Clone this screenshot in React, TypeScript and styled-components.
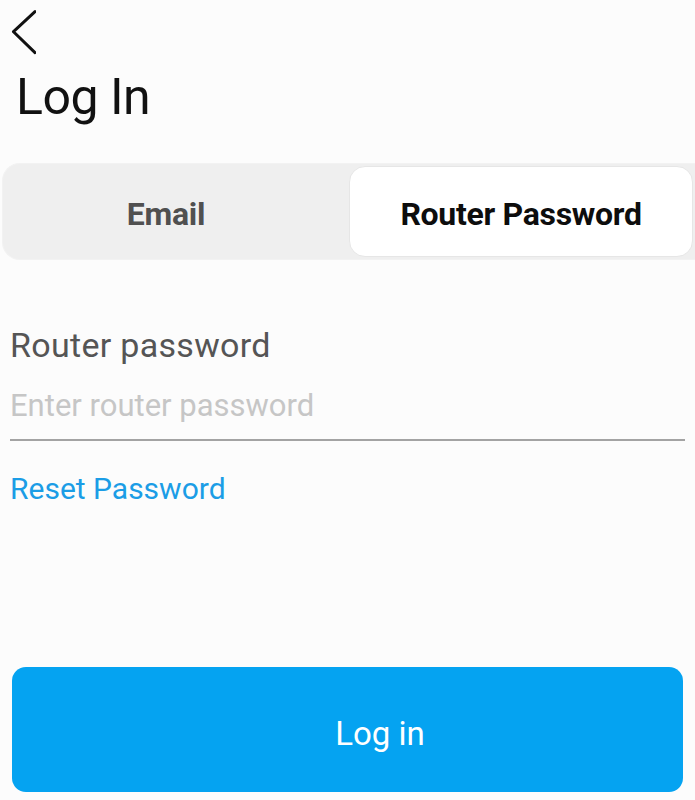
import styled, { createGlobalStyle } from 'styled-components'

const GlobalStyle = createGlobalStyle`
  html, body {
    margin: 0;
    padding: 0;
    background: #fcfcfc;
  }
  body {
    font-family: Roboto, 'Liberation Sans', sans-serif;
  }
`

const App = () => {
  return (
    <>
      <GlobalStyle />
      <StyledPage>
        <StyledHeader>
          <StyledBackButton aria-label="Back">
            <svg width="26" height="46" viewBox="0 0 26 46" fill="none">
              <polyline
                points="25,2.7 3.5,22.7 25,43.7"
                stroke="#111"
                strokeWidth="3"
                strokeLinecap="round"
                strokeLinejoin="round"
              />
            </svg>
          </StyledBackButton>
          <StyledTitle>Log In</StyledTitle>
        </StyledHeader>

        <StyledSegmented>
          <StyledTab>Email</StyledTab>
          <StyledTab $active>Router Password</StyledTab>
        </StyledSegmented>

        <StyledForm>
          <StyledLabel htmlFor="router-password">Router password</StyledLabel>
          <StyledInput
            id="router-password"
            type="password"
            placeholder="Enter router password"
          />
          <StyledLink href="#">Reset Password</StyledLink>
        </StyledForm>

        <StyledLoginButton>Log in</StyledLoginButton>
      </StyledPage>
    </>
  )
}

export default App

const StyledPage = styled.div`
  box-sizing: border-box;
  min-height: 100vh;
  display: flex;
  flex-direction: column;
  padding-bottom: 8px;
`

const StyledHeader = styled.header`
  display: flex;
  flex-direction: column;
  padding: 9px 0 0 10px;
`

const StyledBackButton = styled.button`
  display: block;
  width: 26px;
  height: 46px;
  padding: 0;
  border: none;
  background: none;
  cursor: pointer;

  svg {
    display: block;
  }
`

const StyledTitle = styled.h1`
  margin: 12px 0 0 6px;
  font-size: 50px;
  line-height: 60px;
  font-weight: 400;
  color: #111;
  letter-spacing: -0.5px;
`

const StyledSegmented = styled.div`
  box-sizing: border-box;
  margin: 36px 0 0 2px;
  height: 97px;
  padding: 2px 2px 2px 0;
  display: grid;
  grid-template-columns: 346px 1fr;
  background: #efefef;
  border: 1px solid #f2f2f2;
  border-right: none;
  border-radius: 18px 0 0 18px;
`

const StyledTab = styled.button<{ $active?: boolean }>`
  box-sizing: border-box;
  display: flex;
  align-items: center;
  justify-content: center;
  padding: ${({ $active }) => ($active ? '5px 0 0' : '5px 20px 0 0')};
  border: ${({ $active }) => ($active ? '1px solid #e6e6e6' : 'none')};
  border-radius: 16px;
  background: ${({ $active }) => ($active ? '#ffffff' : 'transparent')};
  color: ${({ $active }) => ($active ? '#0d0d0d' : '#505050')};
  font-family: Roboto, 'Liberation Sans', sans-serif;
  font-size: 32px;
  line-height: 38px;
  font-weight: 700;
  letter-spacing: -0.3px;
  cursor: pointer;
`

const StyledForm = styled.div`
  display: flex;
  flex-direction: column;
  align-items: flex-start;
  padding: 65px 10px 0 10px;
`

const StyledLabel = styled.label`
  font-size: 34px;
  line-height: 40px;
  font-weight: 400;
  letter-spacing: 0.3px;
  color: #555;
`

const StyledInput = styled.input`
  box-sizing: border-box;
  width: 100%;
  margin-top: 20px;
  padding: 0 0 14px;
  height: 56px;
  border: none;
  border-bottom: 2px solid #a3a3a3;
  background: transparent;
  outline: none;
  font-family: Roboto, 'Liberation Sans', sans-serif;
  font-size: 31px;
  line-height: 40px;
  color: #333;

  &::placeholder {
    color: #c6c6c6;
  }
`

const StyledLink = styled.a`
  margin-top: 30px;
  font-size: 30px;
  line-height: 36px;
  color: #1b9de6;
  text-decoration: none;
`

const StyledLoginButton = styled.button`
  margin: auto 12px 0;
  height: 125px;
  padding: 8px 0 0 65px;
  border: none;
  border-radius: 14px;
  background: #05a3f1;
  color: #fff;
  font-family: Roboto, 'Liberation Sans', sans-serif;
  font-size: 33px;
  line-height: 40px;
  font-weight: 400;
  cursor: pointer;
`
